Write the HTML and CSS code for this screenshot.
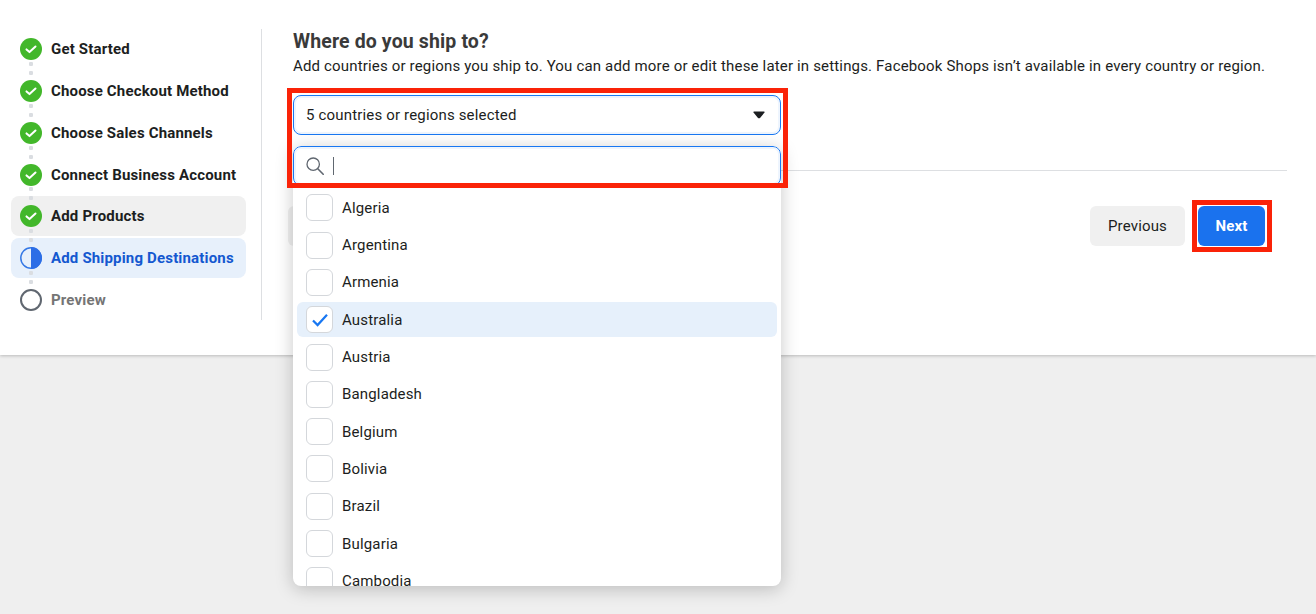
FILE: index.html
```html
<!DOCTYPE html>
<html lang="en">
<head>
    <meta charset="UTF-8">
    <meta name="viewport" content="width=device-width, initial-scale=1.0">
    <title>Add Shipping Destinations</title>
    <link rel="stylesheet" href="styles.css">
</head>
<body>
    <div class="panel">
        <div class="steps">
            <div class="step">
                <svg class="step-icon" viewBox="0 0 22 22"><circle cx="11" cy="11" r="11" fill="#42b72a"/><path d="M6.5 11.4l3 2.7 6-5.6" fill="none" stroke="#fff" stroke-width="2" stroke-linecap="round" stroke-linejoin="round"/></svg>
                <span>Get Started</span>
            </div>
            <div class="step dotted">
                <svg class="step-icon" viewBox="0 0 22 22"><circle cx="11" cy="11" r="11" fill="#42b72a"/><path d="M6.5 11.4l3 2.7 6-5.6" fill="none" stroke="#fff" stroke-width="2" stroke-linecap="round" stroke-linejoin="round"/></svg>
                <span>Choose Checkout Method</span>
            </div>
            <div class="step dotted">
                <svg class="step-icon" viewBox="0 0 22 22"><circle cx="11" cy="11" r="11" fill="#42b72a"/><path d="M6.5 11.4l3 2.7 6-5.6" fill="none" stroke="#fff" stroke-width="2" stroke-linecap="round" stroke-linejoin="round"/></svg>
                <span>Choose Sales Channels</span>
            </div>
            <div class="step dotted">
                <svg class="step-icon" viewBox="0 0 22 22"><circle cx="11" cy="11" r="11" fill="#42b72a"/><path d="M6.5 11.4l3 2.7 6-5.6" fill="none" stroke="#fff" stroke-width="2" stroke-linecap="round" stroke-linejoin="round"/></svg>
                <span>Connect Business Account</span>
            </div>
            <div class="step dotted step-done">
                <svg class="step-icon" viewBox="0 0 22 22"><circle cx="11" cy="11" r="11" fill="#42b72a"/><path d="M6.5 11.4l3 2.7 6-5.6" fill="none" stroke="#fff" stroke-width="2" stroke-linecap="round" stroke-linejoin="round"/></svg>
                <span>Add Products</span>
            </div>
            <div class="step dotted step-current">
                <svg class="step-icon" viewBox="0 0 22 22"><circle cx="11" cy="11" r="10.2" fill="none" stroke="#3578e5" stroke-width="1.5"/><path d="M11 0a11 11 0 0 1 0 22z" fill="#2d6ee6"/></svg>
                <span>Add Shipping Destinations</span>
            </div>
            <div class="step dotted step-todo">
                <svg class="step-icon" viewBox="0 0 22 22"><circle cx="11" cy="11" r="10" fill="none" stroke="#606770" stroke-width="2"/></svg>
                <span>Preview</span>
            </div>
        </div>

        <div class="main">
            <h1 class="title">Where do you ship to?</h1>
            <p class="subtitle">Add countries or regions you ship to. You can add more or edit these later in settings. Facebook Shops isn’t available in every country or region.</p>

            <div class="select">
                <span>5 countries or regions selected</span>
                <svg class="arrow" viewBox="0 0 12 8"><path d="M1 .5h10c.6 0 .9.7.5 1.100L7 6.900c-.5.600-1.500.600-2 0L.5 1.600C.1 1.200.4.500 1 .5z" fill="#1c1e21"/></svg>
            </div>

            <hr class="rule">

            <div class="actions">
                <button class="btn btn-back"></button>
                <div class="actions-right">
                    <button class="btn">Previous</button>
                    <button class="btn btn-primary">Next</button>
                </div>
            </div>

            <div class="menu">
                <div class="search">
                    <svg class="search-icon" viewBox="0 0 18 18"><circle cx="7.2" cy="7.2" r="6.2" fill="none" stroke="#606770" stroke-width="1.3"/><path d="M11.8 11.8l5.400 5.400" stroke="#606770" stroke-width="1.6" stroke-linecap="round"/></svg>
                    <span class="caret"></span>
                </div>
                <div class="list">
                    <div class="item"><span class="box"></span>Algeria</div>
                    <div class="item"><span class="box"></span>Argentina</div>
                    <div class="item"><span class="box"></span>Armenia</div>
                    <div class="item item-on">
                        <span class="box"><svg viewBox="0 0 16 14" width="16" height="14"><path d="M1 7.5l4.600 4.600L15 1.800" fill="none" stroke="#1877f2" stroke-width="2.200"/></svg></span>Australia
                    </div>
                    <div class="item"><span class="box"></span>Austria</div>
                    <div class="item"><span class="box"></span>Bangladesh</div>
                    <div class="item"><span class="box"></span>Belgium</div>
                    <div class="item"><span class="box"></span>Bolivia</div>
                    <div class="item"><span class="box"></span>Brazil</div>
                    <div class="item"><span class="box"></span>Bulgaria</div>
                    <div class="item"><span class="box"></span>Cambodia</div>
                </div>
            </div>
        </div>
    </div>

    <!-- red marks drawn over the screenshot -->
    <div class="mark mark-select"></div>
    <div class="mark mark-next"></div>
</body>
</html>
```

FILE: styles.css
```css
* {
    margin: 0;
    padding: 0;
    box-sizing: border-box;
    font-family: Roboto, "Liberation Sans", sans-serif;
}

body {
    height: 614px;
    overflow: hidden;
    position: relative;
    background-color: #efefef;
    color: #1c1e21;
}

.panel {
    display: flex;
    height: 355px;
    padding: 29px 29px 0 11px;
    background: #fff;
    box-shadow: 0 1px 3px rgba(0, 0, 0, 0.22);
}

/* Left steps */
.steps {
    display: flex;
    flex-direction: column;
    gap: 1.8px;
    flex: none;
    width: 251px;
    height: 291px;
    padding-top: 0.2px;
    padding-right: 15px;
    border-right: 1px solid #dddfe2;
}

.step {
    position: relative;
    display: flex;
    align-items: center;
    gap: 9px;
    height: 40px;
    flex: none;
    padding-left: 9px;
    border-radius: 8px;
    font-size: 15px;
    letter-spacing: 0.17px;
    font-weight: 700;
}

.step-icon {
    width: 22px;
    height: 22px;
    flex: none;
}

.dotted::before {
    content: "";
    position: absolute;
    z-index: 1;
    left: 18px;
    top: -9px;
    width: 4px;
    height: 13px;
    background: radial-gradient(circle at 2px 2px, #dadde1 2px, transparent 2.4px) 0 0 / 4px 9px repeat-y;
}

.step-done {
    background: #f0f0f0;
}

.step-current {
    background: #e7f0fb;
    color: #1458d0;
}

.step-todo {
    color: #757575;
}

/* Right side */
.main {
    position: relative;
    flex: 1;
    padding-left: 31px;
}

.title {
    margin-top: 2px;
    font-size: 19.5px;
    line-height: 22px;
    letter-spacing: 0.13px;
    font-weight: 700;
    color: #3a3a3a;
}

.subtitle {
    margin-top: 3px;
    font-size: 15px;
    letter-spacing: 0.165px;
    line-height: 20px;
    color: #1c1e21;
    white-space: nowrap;
}

.select {
    display: flex;
    align-items: center;
    justify-content: space-between;
    width: 488px;
    height: 40px;
    margin-top: 19px;
    padding: 0 15px 0 12px;
    border: 1.5px solid #1877f2;
    border-radius: 8px;
    box-shadow: inset 0 0 0 2px #eef5fe;
    font-size: 15px;
    letter-spacing: 0.17px;
}

.arrow {
    width: 12px;
    height: 8px;
}

.rule {
    height: 1px;
    margin-top: 35px;
    border: none;
    background: #dddfe2;
}

.actions {
    display: flex;
    justify-content: space-between;
    margin-top: 35px;
    margin-left: -5px;
    padding-right: 22px;
}

.actions-right {
    display: flex;
    gap: 13px;
}

.btn {
    height: 40px;
    padding: 0 18px;
    border: none;
    border-radius: 6px;
    background: #f0f0f0;
    color: #1c1e21;
    font-size: 15px;
    letter-spacing: 0.16px;
}

.btn-back {
    width: 100px;
}

.btn-primary {
    width: 67px;
    padding: 0;
    background: #1a72ee;
    color: #fff;
    font-weight: 700;
}

/* Dropdown */
.menu {
    position: absolute;
    top: 117px;
    left: 31px;
    width: 488px;
    height: 440px;
    overflow: hidden;
    z-index: 2;
    background: #fff;
    border-radius: 8px;
    box-shadow: 0 3px 18px rgba(0, 0, 0, 0.22);
}

.search {
    display: flex;
    align-items: center;
    gap: 9px;
    height: 40px;
    padding-left: 12px;
    border: 1.5px solid #1877f2;
    border-radius: 8px;
    box-shadow: inset 0 0 0 2px #eef5fe;
}

.search-icon {
    width: 18px;
    height: 18px;
}

.caret {
    width: 1px;
    height: 18px;
    background: #606770;
}

.list {
    display: flex;
    flex-direction: column;
    gap: 2.33px;
    padding: 4.2px 4px;
}

.item {
    display: flex;
    align-items: center;
    flex: none;
    gap: 9px;
    height: 35px;
    padding-left: 9px;
    border-radius: 6px;
    font-size: 15px;
    letter-spacing: 0.16px;
}

.item-on {
    background: #e6f0fb;
}

.box {
    display: flex;
    align-items: center;
    justify-content: center;
    flex: none;
    width: 27px;
    height: 27px;
    border: 1px solid #d4d7db;
    border-radius: 6px;
    background: #fff;
}

/* Red annotations */
.mark {
    position: absolute;
    z-index: 3;
    border: 5px solid #fa2308;
}

.mark-select {
    left: 287px;
    top: 88px;
    width: 501px;
    height: 100px;
}

.mark-next {
    left: 1192px;
    top: 200px;
    width: 80px;
    height: 52px;
}
```
